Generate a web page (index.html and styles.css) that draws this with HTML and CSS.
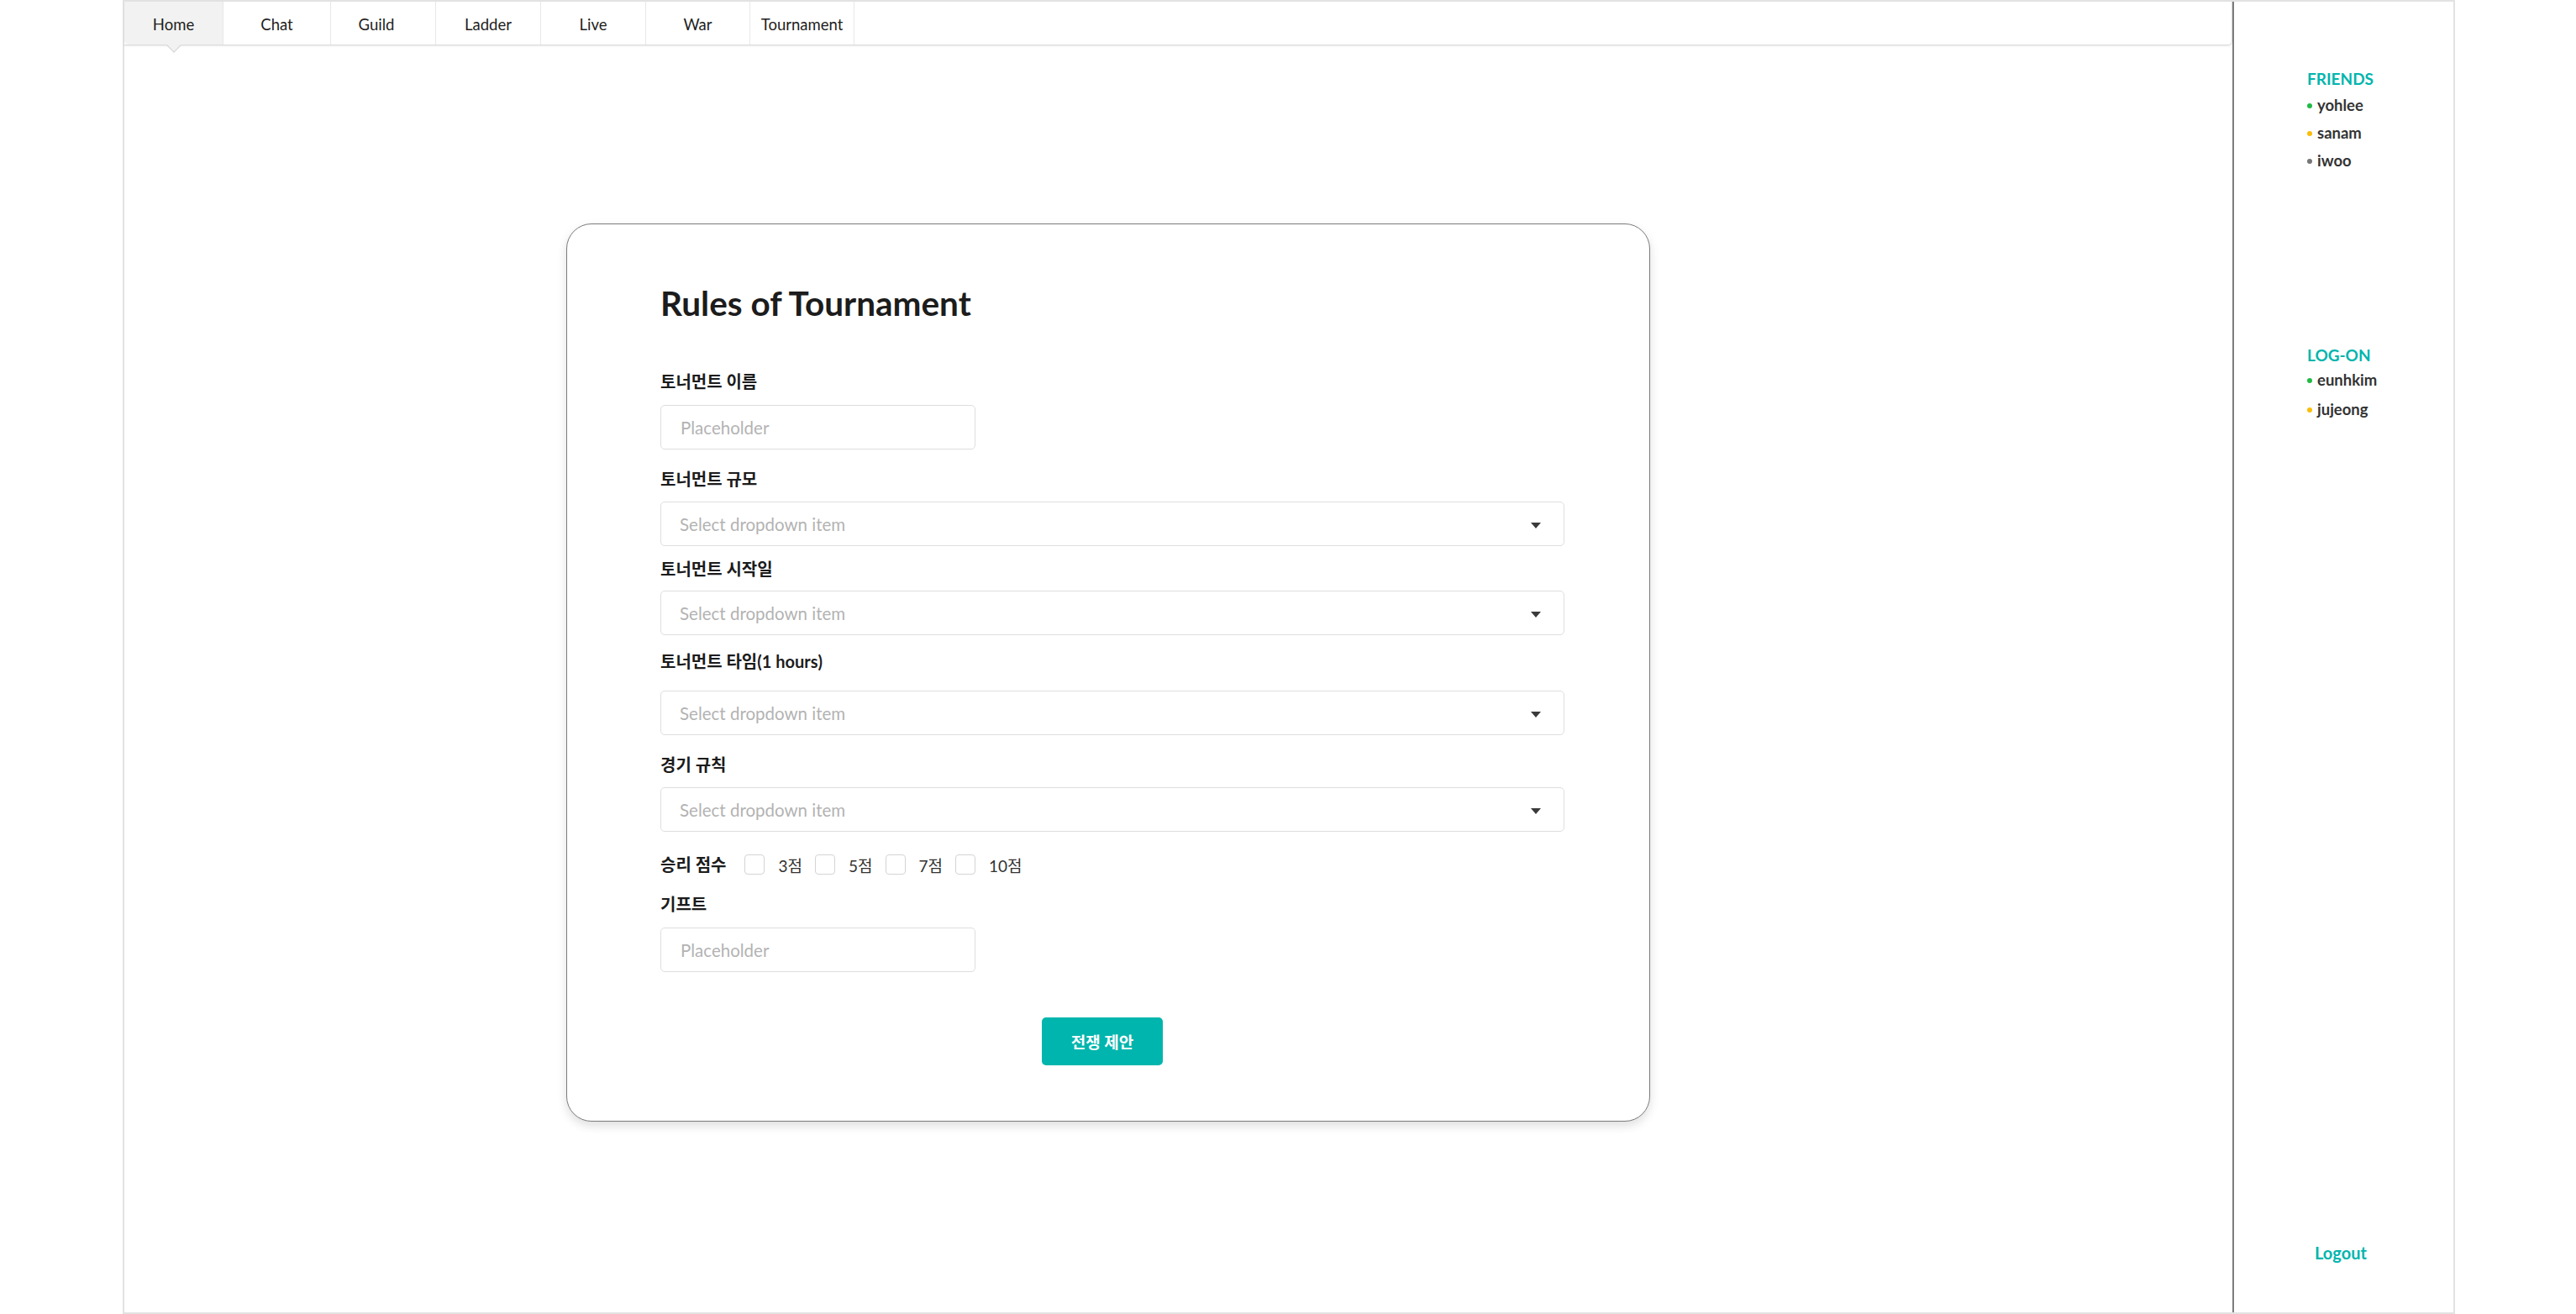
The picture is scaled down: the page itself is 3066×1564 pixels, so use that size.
FILE: index.html
```html
<!DOCTYPE html>
<html lang="ko">
<head>
<meta charset="utf-8">
<title>Rules of Tournament</title>
<link rel="stylesheet" href="styles.css">
</head>
<body>
<div class="frame">
  <div class="main">
    <nav class="menu">
      <a class="tab tab-home active">Home</a>
      <a class="tab tab-chat">Chat</a>
      <a class="tab tab-guild">Guild</a>
      <a class="tab">Ladder</a>
      <a class="tab">Live</a>
      <a class="tab tab-narrow">War</a>
      <a class="tab tab-narrow">Tournament</a>
    </nav>

    <section class="card">
      <h1 class="card-title">Rules of Tournament</h1>

      <div class="field field-first">
        <label class="field-label">토너먼트 이름</label>
        <input class="text-input" type="text" placeholder="Placeholder">
      </div>

      <div class="field">
        <label class="field-label">토너먼트 규모</label>
        <div class="select"><span class="select-text">Select dropdown item</span><span class="caret"></span></div>
      </div>

      <div class="field field-tight">
        <label class="field-label label-tight">토너먼트 시작일</label>
        <div class="select"><span class="select-text">Select dropdown item</span><span class="caret"></span></div>
      </div>

      <div class="field field-mid">
        <label class="field-label label-loose">토너먼트 타임(1 hours)</label>
        <div class="select"><span class="select-text">Select dropdown item</span><span class="caret"></span></div>
      </div>

      <div class="field">
        <label class="field-label">경기 규칙</label>
        <div class="select"><span class="select-text">Select dropdown item</span><span class="caret"></span></div>
      </div>

      <div class="check-row">
        <span class="field-label row-label">승리 점수</span>
        <label class="option"><span class="box"></span><span class="option-text">3점</span></label>
        <label class="option"><span class="box"></span><span class="option-text">5점</span></label>
        <label class="option"><span class="box"></span><span class="option-text">7점</span></label>
        <label class="option"><span class="box"></span><span class="option-text">10점</span></label>
      </div>

      <div class="field">
        <label class="field-label label-gift">기프트</label>
        <input class="text-input" type="text" placeholder="Placeholder">
      </div>

      <button class="submit" type="button">전쟁 제안</button>
    </section>
  </div>

  <aside class="sidebar">
    <div class="group">
      <h3 class="group-title">FRIENDS</h3>
      <ul class="people">
        <li><span class="dot dot-green"></span>yohlee</li>
        <li><span class="dot dot-yellow"></span>sanam</li>
        <li><span class="dot dot-grey"></span>iwoo</li>
      </ul>
    </div>
    <div class="group group-logon">
      <h3 class="group-title">LOG-ON</h3>
      <ul class="people">
        <li><span class="dot dot-green"></span>eunhkim</li>
        <li><span class="dot dot-yellow"></span>jujeong</li>
      </ul>
    </div>
    <a class="logout">Logout</a>
  </aside>
</div>
</body>
</html>
```

FILE: styles.css
```css
* { box-sizing: border-box; }

html, body {
  margin: 0;
  padding: 0;
  background: #ffffff;
}

body {
  font-family: Lato, "Noto Sans CJK KR", sans-serif;
  color: #222222;
  width: 3066px;
  height: 1564px;
  overflow: hidden;
}

.frame {
  margin-left: 146px;
  width: 2776px;
  height: 1564px;
  border: 2px solid #e2e2e2;
  display: flex;
}

.main {
  flex: 0 0 2511px;
  border-right: 2px solid #7d7d7d;
  display: flex;
  flex-direction: column;
  align-items: flex-start;
}

/* ---------- menu ---------- */
.menu {
  display: flex;
  align-self: stretch;
  height: 52px;
  border-bottom: 1px solid #dcdcdd;
  border-right: 1px solid #dcdcdd;
  border-radius: 0 0 5px 0;
  box-shadow: 0 1px 2px rgba(34, 36, 38, 0.1);
}

.tab {
  position: relative;
  flex: 0 0 125px;
  border-right: 1px solid #e8e8e8;
  text-align: center;
  padding-top: 2px;
  line-height: 51px;
  font-size: 18.5px;
  color: #1e1e1e;
  cursor: pointer;
}

.tab-home { flex-basis: 118px; border-bottom-left-radius: 5px; }
.tab-chat { flex-basis: 128px; }
.tab-guild { padding-right: 16px; }
.tab-narrow { flex-basis: 124px; }

.tab.active { background: #f2f2f2; }

.tab.active::after {
  content: "";
  position: absolute;
  left: 50%;
  top: 100%;
  width: 11px;
  height: 11px;
  background: #f2f2f2;
  border-right: 1px solid #d4d4d5;
  border-bottom: 1px solid #d4d4d5;
  transform: translate(-50%, -40%) rotate(45deg);
  z-index: 2;
}

/* ---------- card ---------- */
.card {
  margin: 212px 0 0 526px;
  width: 1290px;
  border: 1.5px solid #7b7b7b;
  border-radius: 30px;
  box-shadow: 0 5px 12px rgba(0, 0, 0, 0.13);
  padding: 70px 101px 66px 111px;
  background: #ffffff;
}

.card-title {
  margin: 0;
  font-size: 40.5px;
  line-height: 48px;
  font-weight: 700;
  color: #1c1c1c;
}

.field { margin-top: 23px; }
.field-first { margin-top: 57px; }
.field-tight { margin-top: 15px; }
.field-mid { margin-top: 19px; }

.field-label {
  display: block;
  font-size: 20px;
  line-height: 24px;
  font-weight: 700;
  color: #1c1c1c;
  margin-bottom: 15px;
}

.field-first .field-label,
.label-gift { margin-bottom: 16px; }
.label-tight { margin-bottom: 14px; }
.label-loose { margin-bottom: 23px; }

.text-input {
  display: block;
  width: 375px;
  height: 53px;
  border: 1.5px solid #dedede;
  border-radius: 5px;
  padding: 0 23px;
  font-family: Lato, "Noto Sans CJK KR", sans-serif;
  font-size: 20.5px;
  color: #333333;
  background: #ffffff;
  outline: none;
}

.text-input::placeholder { color: #b3b3b3; }

.select {
  display: flex;
  align-items: center;
  justify-content: space-between;
  height: 53px;
  border: 1.5px solid #dedede;
  border-radius: 5px;
  padding: 0 27px 0 22px;
}

.select-text {
  font-size: 20.5px;
  color: #b3b3b3;
}

.caret {
  width: 0;
  height: 0;
  border-left: 6px solid transparent;
  border-right: 6px solid transparent;
  border-top: 7px solid #3a3a3a;
  margin-top: 3px;
}

/* ---------- checkboxes ---------- */
.check-row {
  display: flex;
  align-items: center;
  height: 24px;
  margin-top: 27px;
}

.row-label {
  margin: 0 22px 0 0;
}

.option {
  display: flex;
  align-items: center;
  margin-right: 15px;
}

.box {
  width: 24px;
  height: 24px;
  border: 1.5px solid #d4d4d5;
  border-radius: 4px;
  background: #ffffff;
}

.option-text {
  margin-left: 16px;
  font-size: 19px;
  color: #333333;
}

/* ---------- button ---------- */
.submit {
  display: block;
  margin: 54px 0 0 454px;
  width: 144px;
  height: 57px;
  border: none;
  border-radius: 5px;
  background: #00b5ad;
  color: #ffffff;
  font-family: Lato, "Noto Sans CJK KR", sans-serif;
  font-size: 19px;
  font-weight: 700;
  cursor: pointer;
}

/* ---------- sidebar ---------- */
.sidebar {
  flex: 1;
  display: flex;
  flex-direction: column;
  padding: 80px 0 59px 87px;
}

.group-title {
  margin: 0;
  font-size: 19px;
  line-height: 24px;
  font-weight: 700;
  color: #00b5ad;
}

.group-logon { margin-top: 203px; }

.people {
  list-style: none;
  margin: 3px 0 0;
  padding: 0;
}

.group-logon .people { margin-top: 0; }

.people li {
  line-height: 33px;
  font-size: 18.5px;
  font-weight: 700;
  color: #333333;
}

.group-logon .people li { line-height: 35px; }

.dot {
  display: inline-block;
  width: 6px;
  height: 6px;
  border-radius: 50%;
  margin-right: 6px;
  vertical-align: 3px;
}

.dot-green { background: #21ba45; }
.dot-yellow { background: #fbbd08; }
.dot-grey { background: #767676; }

.logout {
  margin-top: auto;
  padding-left: 9px;
  font-size: 20px;
  line-height: 24px;
  font-weight: 700;
  color: #00b5ad;
  cursor: pointer;
}
```
